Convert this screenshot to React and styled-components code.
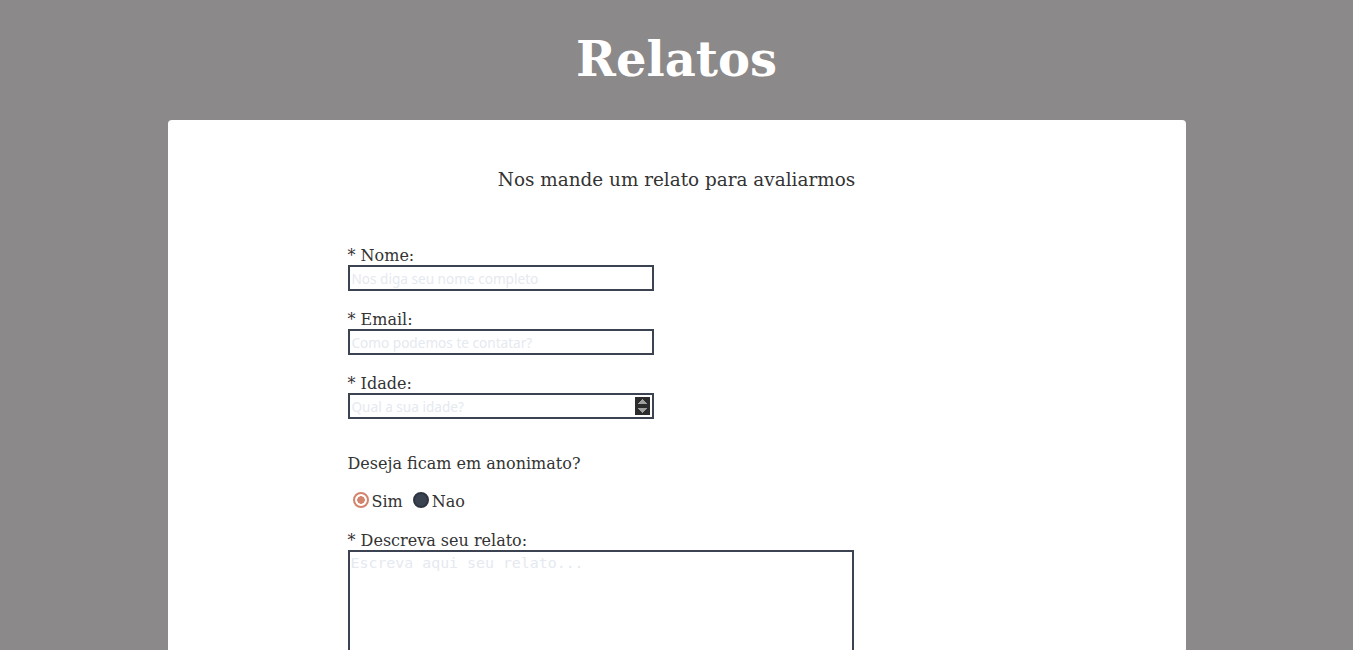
import styled, { createGlobalStyle } from "styled-components"

const GlobalStyle = createGlobalStyle`
    body{
        margin:0;
        background-color:#8b8989;
        font-family:"DejaVu Serif", serif;
        color:#333;
    }
`
const Page = styled.div`
    padding: 0 0 40px;
`
const Title = styled.h1`
    margin:0;
    padding: 29px 0 31px;
    text-align:center;
    color:#fff;
    font-size:48px;
    line-height:60px;
    font-weight:700;
`
const Card = styled.div`
    width:1018px;
    margin:0 auto;
    background-color:#fff;
    border-radius:4px;
    padding: 47px 0 40px;
`
const Subtitle = styled.p`
    margin:0 0 54px;
    text-align:center;
    font-size:18.4px;
    line-height:25px;
`
const Form = styled.form`
    padding-left:180px;
    display:flex;
    flex-direction:column;
    align-items:flex-start;
`
const Field = styled.div`
    display:flex;
    flex-direction:column;
    margin-bottom:${p => p.$gap || 19}px;
`
const Label = styled.label`
    font-size:16px;
    line-height:19px;
`
const Input = styled.input`
    box-sizing:border-box;
    width:306px;
    height:26px;
    margin:0;
    padding:0 2px;
    border:2px solid #3b4252;
    background-color:#fff;
    color-scheme:dark;
    color:#333;
    font-family:"Noto Sans", sans-serif;
    font-size:13.6px;
    &::placeholder{
        color:#e5e9f0;
    }
    &::-webkit-inner-spin-button{
        opacity:1;
    }
    &:focus{ outline:none; }
`
const Question = styled.p`
    margin:0 0 18px;
    font-size:16px;
    line-height:19px;
`
const RadioRow = styled.div`
    display:flex;
    align-items:center;
    height:20px;
    margin-bottom:20px;
`
const RadioOption = styled.label`
    display:flex;
    align-items:center;
    font-size:16px;
    line-height:19px;
    margin-right:5px;
`
const Radio = styled.input`
    appearance:none;
    box-sizing:border-box;
    width:16px;
    height:16px;
    margin:0 3px 2px 5px;
    border-radius:50%;
    border:2px solid #2e3440;
    background-color:#3b4252;
    &:checked{
        border-color:#d3846c;
        background:radial-gradient(circle, #d3846c 0 3.5px, #fff 4px);
    }
`
const TextArea = styled.textarea`
    box-sizing:border-box;
    width:506px;
    height:150px;
    margin:0;
    padding:2px 1px;
    border:2px solid #3b4252;
    background-color:#fff;
    font-family:"DejaVu Sans Mono", monospace;
    font-size:14.9px;
    &::placeholder{
        color:#e5e9f0;
    }
`

function App(){
    return(
        <Page>
            <GlobalStyle/>
            <Title>Relatos</Title>
            <Card>
                <Subtitle>Nos mande um relato para avaliarmos</Subtitle>
                <Form>
                    <Field>
                        <Label>* Nome:</Label>
                        <Input type="text" placeholder="Nos diga seu nome completo"/>
                    </Field>
                    <Field>
                        <Label>* Email:</Label>
                        <Input type="email" placeholder="Como podemos te contatar?"/>
                    </Field>
                    <Field $gap={35}>
                        <Label>* Idade:</Label>
                        <Input type="number" placeholder="Qual a sua idade?"/>
                    </Field>
                    <Question>Deseja ficam em anonimato?</Question>
                    <RadioRow>
                        <RadioOption><Radio type="radio" name="anon" defaultChecked/>Sim</RadioOption>
                        <RadioOption><Radio type="radio" name="anon"/>Nao</RadioOption>
                    </RadioRow>
                    <Field>
                        <Label>* Descreva seu relato:</Label>
                        <TextArea placeholder="Escreva aqui seu relato..."/>
                    </Field>
                </Form>
            </Card>
        </Page>
    )
}

export default App;
